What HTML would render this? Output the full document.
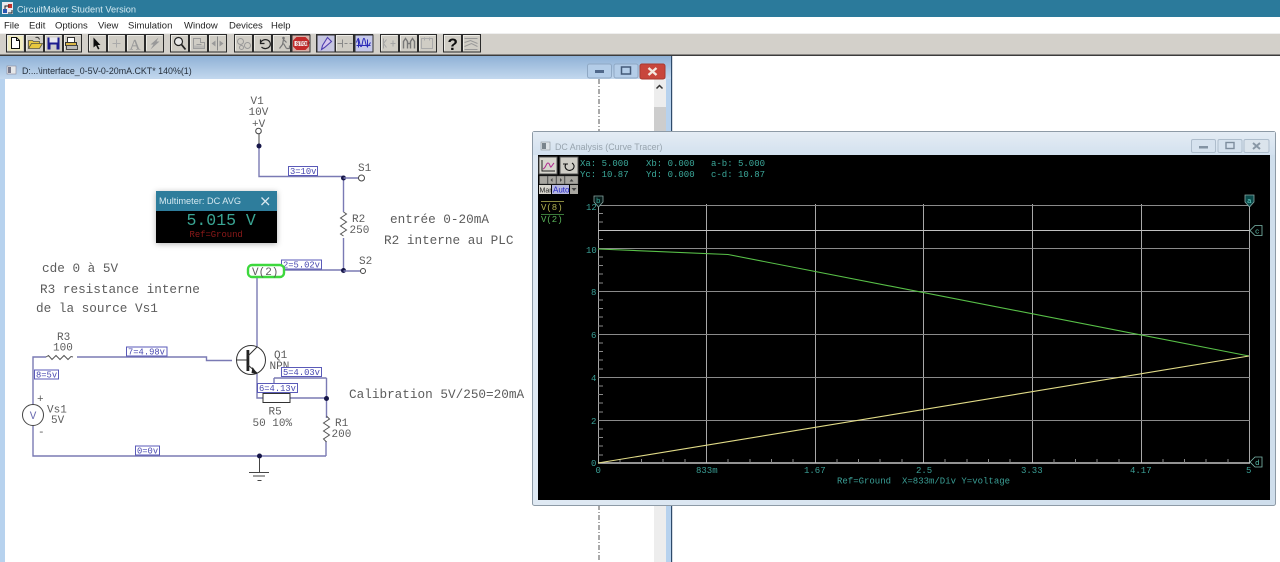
<!DOCTYPE html>
<html><head><meta charset="utf-8"><style>
html,body{margin:0;padding:0;background:#fff;width:1280px;height:562px;overflow:hidden}
svg{display:block}
.ui{font-family:"Liberation Sans",sans-serif}
.m{font-family:"Liberation Mono",monospace}
.sch{font-family:"Liberation Mono",monospace;font-size:12.7px;fill:#5c5c5c}
.lb{font-family:"Liberation Mono",monospace;font-size:11px;fill:#5c5c5c}
.nd{font-family:"Liberation Mono",monospace;font-size:8.8px;fill:#4848b0}
.cy{font-family:"Liberation Mono",monospace;font-size:9px;fill:#3ba89a}
.ax{font-family:"Liberation Mono",monospace;font-size:9px;fill:#3a9f96}
.w{stroke:#7a7ab4;stroke-width:1.4;fill:none}
.k{stroke:#444;stroke-width:1;fill:none}
.nb{fill:#fff;stroke:#5a5ab8;stroke-width:1}
.g{stroke:#a8a8a8;stroke-width:1;fill:none}
.t{stroke:#888;stroke-width:1}
</style></head><body>
<svg width="1280" height="562" viewBox="0 0 1280 562" xmlns="http://www.w3.org/2000/svg">
<defs>
<linearGradient id="cw" x1="0" y1="0" x2="0" y2="1"><stop offset="0" stop-color="#8fb1d6"/><stop offset="1" stop-color="#c3d8ee"/></linearGradient>
<linearGradient id="pw" x1="0" y1="0" x2="1" y2="0"><stop offset="0" stop-color="#dfe9f3"/><stop offset="1" stop-color="#cfdeec"/></linearGradient>
<linearGradient id="pt" x1="0" y1="0" x2="0" y2="1"><stop offset="0" stop-color="#e4ecf4"/><stop offset="1" stop-color="#d3e1ef"/></linearGradient>
<filter id="bl" x="-10%" y="-10%" width="120%" height="120%"><feGaussianBlur stdDeviation="0.35"/></filter>
<filter id="sh" x="-20%" y="-20%" width="140%" height="140%"><feDropShadow dx="0" dy="1" stdDeviation="3" flood-color="#000" flood-opacity=".3"/></filter>
<g id="btn"><rect x="0" y="0" width="18" height="17.5" fill="#d0cdc5" stroke="#2c2c2c" stroke-width="1"/><path d="M1 16V1H17" stroke="#ecebe6" fill="none"/></g>
</defs>

<!-- title bar -->
<rect x="0" y="0" width="1280" height="17" fill="#2b7a9b"/>
<rect x="2" y="2" width="11" height="12" fill="#e8e8ee"/>
<path d="M3 9h4v4H3z" fill="#2a55b0"/><path d="M8 4h4v4H8z" fill="#c0302a"/><path d="M5 9V6h4M8 13h4v-3" stroke="#222" fill="none"/>
<text x="17" y="12.5" class="ui" font-size="9.2" fill="#d4e9f1">CircuitMaker Student Version</text>

<!-- menu -->
<rect x="0" y="17" width="1280" height="16" fill="#fff"/>
<g class="ui" font-size="9.5" fill="#222">
<text x="4" y="28.7">File</text><text x="29" y="28.7">Edit</text><text x="55" y="28.7">Options</text><text x="98" y="28.7">View</text><text x="128" y="28.7">Simulation</text><text x="184" y="28.7">Window</text><text x="229" y="28.7">Devices</text><text x="271" y="28.7">Help</text>
</g>

<!-- toolbar -->
<rect x="0" y="33" width="1280" height="22" fill="#d3d0ca"/>
<rect x="0" y="33" width="1280" height="1" fill="#efefef"/>
<rect x="0" y="54.5" width="1280" height="1.5" fill="#3c3c3c"/>
<g transform="translate(6.5,34.5)" filter="url(#bl)">
<use href="#btn" x="0"/><use href="#btn" x="19"/><use href="#btn" x="38"/><use href="#btn" x="57"/>
<use href="#btn" x="82"/><use href="#btn" x="101"/><use href="#btn" x="120"/><use href="#btn" x="139"/>
<use href="#btn" x="164"/><use href="#btn" x="183"/><use href="#btn" x="202"/>
<use href="#btn" x="228"/><use href="#btn" x="247"/><use href="#btn" x="266"/><use href="#btn" x="285"/>
<use href="#btn" x="310"/><use href="#btn" x="329"/><use href="#btn" x="348"/>
<use href="#btn" x="374"/><use href="#btn" x="393"/><use href="#btn" x="412"/>
<use href="#btn" x="437"/><use href="#btn" x="456"/>
<!-- new -->
<rect x="1.5" y="1.5" width="15" height="14.5" fill="#f0ecc0"/><path d="M5 3h5l3 3v8H5z" fill="#fff" stroke="#111"/><path d="M10 3v3h3" stroke="#111" fill="none"/>
<!-- open -->
<path d="M22 14V6h4l1 1h6v2h-8l-3 5h11l3-5H25" fill="#e8c840" stroke="#554" stroke-width=".8"/><path d="M29 3q3-1 4 2" stroke="#333" fill="none"/>
<!-- save -->
<rect x="41" y="3" width="12" height="12" fill="#1a1a90"/><rect x="43" y="3" width="8" height="5" fill="#e8e8f0"/><rect x="44" y="10" width="6" height="5" fill="#ccc"/>
<!-- print -->
<rect x="61" y="3" width="7" height="5" fill="#fff" stroke="#333"/><path d="M59 8h11v3H59z" fill="#d9b64a" stroke="#333"/><rect x="60" y="11" width="11" height="4" fill="#bbb" stroke="#444"/>
<!-- arrow -->
<path d="M87 3v10l2.5-2 2 4 1.5-.8-2-3.700h3z" fill="#111"/>
<path d="M110 5v8M106 9h8" stroke="#aaa" stroke-width="1"/>
<text x="123" y="15" font-family="Liberation Serif,serif" font-size="15" fill="#999" stroke="#999" stroke-width=".2">A</text>
<path d="M152 3l-8 7 3 0-3 5 9-8-3 0z" fill="#999"/>
<!-- zoom -->
<circle cx="172" cy="7" r="4" fill="#e8e8e8" stroke="#222" stroke-width="1.200"/><path d="M175 10l4 5" stroke="#222" stroke-width="1.800"/>
<path d="M187 14V4h7v4h4v6z M190 10h5" fill="none" stroke="#999"/><rect x="187" y="11" width="11" height="3" fill="#aaa" opacity=".6"/>
<path d="M211 2v14" stroke="#888"/><path d="M209 6l-4 3 4 3zM213 6l4 3-4 3z" fill="#999"/>
<!-- sim -->
<circle cx="234" cy="7" r="3" fill="none" stroke="#999"/><circle cx="241" cy="11" r="3" fill="none" stroke="#999"/><circle cx="235" cy="13" r="2" fill="none" stroke="#999"/>
<path d="M254 8.500a5 4.500 0 1 1 1 4M254 5v4h4" fill="none" stroke="#222" stroke-width="1.200"/>
<path d="M273 14l3-4 1-5 3 3M277 9l3 5M280 14h3v-3" fill="none" stroke="#777" stroke-width="1.200"/><circle cx="277" cy="3.500" r="1.300" fill="#777"/>
<rect x="285.500" y=".5" width="18" height="17" fill="#d8b0a8" stroke="#333"/>
<path d="M290 2.500h9l3.500 3.500v6l-3.500 3.500h-9l-3.500-3.500v-6z" fill="#c22a2a"/><rect x="288" y="6.500" width="13" height="5" fill="#f6e6e6"/>
<text x="289.500" y="11" class="ui" font-size="5" font-weight="700" fill="#a02020">STOP</text>
<!-- probe -->
<rect x="310.500" y=".5" width="18" height="17" fill="#c7c7e2" stroke="#333"/>
<path d="M321 3l4 4-7 6-3 2 1-4z" fill="#d6c8ee" stroke="#5040b0" stroke-width="1.100"/>
<path d="M331 9h5M343 9h3" stroke="#888"/><path d="M336 5v8M338 9h3" stroke="#888"/>
<!-- analysis -->
<rect x="348.500" y=".5" width="18" height="17" fill="#c6c9ea" stroke="#333"/>
<path d="M350 8c2-6 2-5 3 0s2 6 3 0 2-5 3 0 2 5 5 0M350 11h14M352 5v8M361 5v8" stroke="#2a2ab8" fill="none" stroke-width="1"/>
<!-- more -->
<path d="M377 4v10M380 5l-3 4 3 4M384 9h5M386.500 6v6" stroke="#a5a5a5" fill="none"/>
<path d="M397 14V7l2-3 2 3v7M404 14V7l2-3 2 3v7M401 9h3" stroke="#777" fill="none" stroke-width="1.400"/>
<path d="M415 4h11v10h-11zM418 3v3M423 3v3" stroke="#aaa" fill="none"/>
<text x="441" y="15.500" class="ui" font-size="17" font-weight="700" fill="#111">?</text>
<path d="M458 4h13M458 8l6-2 7 3M458 12l7-3 6 3M458 15h13" stroke="#999" fill="none"/>
</g>

<!-- child window -->
<rect x="0" y="56" width="672" height="506" fill="#b7d2ee"/>
<rect x="0" y="56" width="672" height="23" fill="url(#cw)"/>
<rect x="671" y="56" width="1.200" height="506" fill="#2e4a6a"/>
<rect x="5" y="79" width="650" height="483" fill="#fff"/>
<rect x="654" y="79" width="12" height="483" fill="#ededed"/>
<rect x="654" y="107" width="12" height="100" fill="#cdcdcd"/>
<path d="M656.500 88.500l3-3 3 3" stroke="#333" stroke-width="1.500" fill="none"/>
<rect x="7" y="66" width="9" height="8" fill="#e6e8ea" stroke="#889" stroke-width=".6"/><rect x="8" y="67" width="3" height="6" fill="#778"/>
<text x="22" y="74" class="ui" font-size="8.900" fill="#26303c">D:...\interface_0-5V-0-20mA.CKT* 140%(1)</text>
<g>
<rect x="587.500" y="64" width="24" height="14" rx="2" fill="#b4cde8" stroke="#8fa8c4"/><rect x="595" y="70" width="9" height="3" fill="#50688a"/>
<rect x="614" y="64" width="24" height="14" rx="2" fill="#b4cde8" stroke="#8fa8c4"/><rect x="621.500" y="67" width="9" height="7" fill="none" stroke="#445a78" stroke-width="1.500"/>
<rect x="640" y="64" width="25" height="15" rx="2" fill="#c8463c" stroke="#a83a30"/><path d="M648.500 68l8 7M656.500 68l-8 7" stroke="#f4e8e0" stroke-width="2.400"/>
</g>

<!-- cursor dash line -->
<path d="M599 79V131M599 505V562" stroke="#555" stroke-width="1" stroke-dasharray="5 2 1 2"/>

<!-- schematic -->
<g filter="url(#bl)">
<text x="250.500" y="104" class="lb">V1</text><text x="248.500" y="115" class="lb">10V</text><text x="252" y="127" class="lb">+V</text>
<circle cx="258.500" cy="131" r="2.800" fill="#fff" stroke="#444"/>
<path d="M259 134V146" class="k"/>
<path d="M259 146V176.500H343.500M343.500 176.500V270M259 270H343.500" class="w" />
<circle cx="259" cy="146" r="2.500" fill="#151548"/><circle cx="343.500" cy="178" r="2.500" fill="#151548"/><circle cx="343.500" cy="270.500" r="2.500" fill="#151548"/>
<path d="M343.500 178H360M343.500 271H361" class="w"/>
<circle cx="361.500" cy="178" r="3" fill="#fff" stroke="#444"/><circle cx="363" cy="271" r="2.500" fill="#fff" stroke="#444"/>
<text x="358" y="171" class="lb">S1</text><text x="359" y="264" class="lb">S2</text>
<rect x="288.500" y="166.500" width="29" height="9" class="nb"/><text x="290" y="174" class="nd">3=10v</text>
<rect x="342" y="212" width="3" height="26" fill="#fff"/>
<path d="M343.500 212l3 2-6 4 6 4-6 4 6 4-6 4 3 2" fill="none" stroke="#555"/>
<text x="352" y="222" class="lb">R2</text><text x="349.500" y="233" class="lb">250</text>
<rect x="281.500" y="260" width="40" height="9" class="nb"/><text x="283" y="267.500" class="nd">2=5.02v</text>
<rect x="248" y="265" width="36" height="12" rx="4" fill="#fff" stroke="#3cd83c" stroke-width="2.400"/>
<text x="252" y="275" class="lb">V(2)</text>
<path d="M257 278V347" class="w"/>

<text x="42" y="272" class="sch">cde 0 à 5V</text>
<text x="40" y="293" class="sch">R3 resistance interne</text>
<text x="36" y="312" class="sch">de la source Vs1</text>
<text x="390" y="223" class="sch">entrée 0-20mA</text>
<text x="384" y="244" class="sch">R2 interne au PLC</text>
<text x="349" y="398" class="sch">Calibration 5V/250=20mA</text>

<!-- base circuit -->
<path d="M33 405V357H46M77 357H206.500V360.500H232" class="w"/>
<path d="M46 357l2.500-1.500 3.500 4 4-4 4 4 4-4 4 4 3-3 2 .5" fill="none" stroke="#555"/>
<text x="57" y="340" class="lb">R3</text><text x="53" y="350.500" class="lb">100</text>
<rect x="126.500" y="347" width="40.500" height="9" class="nb"/><text x="128" y="354.500" class="nd">7=4.98v</text>
<rect x="34.500" y="370" width="24" height="9" class="nb"/><text x="36" y="377.500" class="nd">8=5v</text>
<circle cx="33" cy="415" r="10.500" fill="#fff" stroke="#444"/>
<text x="29.700" y="419" class="lb" style="fill:#6a6ab0">V</text>
<text x="37" y="402" class="lb">+</text><text x="38" y="435" class="lb">-</text>
<text x="47" y="412.500" class="lb">Vs1</text><text x="51" y="423" class="lb">5V</text>
<path d="M33 426V456H326M326 441V456" class="w"/>
<rect x="135.500" y="446" width="24" height="9" class="nb"/><text x="137" y="453.500" class="nd">0=0v</text>
<circle cx="259.500" cy="456" r="2.500" fill="#151548"/>
<path d="M259.500 458V472M249 472.500H269M253 476H265M257.500 480.500H261.500" class="k"/>

<!-- transistor -->
<circle cx="251" cy="360" r="14.500" fill="#fff" stroke="#333"/>
<rect x="246.500" y="350" width="2.800" height="21" fill="#222"/>
<path d="M236 360H247M248 356L257 347M248 365L257 373" stroke="#333" fill="none"/>
<path d="M252.500 367l5 7-6 -1z" fill="#222"/>
<text x="274" y="358" class="lb">Q1</text><text x="269.500" y="369" class="lb">NPN</text>
<path d="M257 374V398H263M290 398H326.500M326.500 378V420M274 378H326.500M274 378V383" class="w"/>
<rect x="281.500" y="367.500" width="40" height="9" class="nb"/><text x="283" y="375" class="nd">5=4.03v</text>
<rect x="257.500" y="383.500" width="40" height="9" class="nb"/><text x="259" y="391" class="nd">6=4.13v</text>
<rect x="263" y="393.500" width="27" height="9" fill="#fff" stroke="#333"/>
<text x="268.500" y="414.500" class="lb">R5</text><text x="252.500" y="426" class="lb">50 10%</text>
<circle cx="326.500" cy="398.500" r="2.500" fill="#151548"/>
<rect x="325" y="418" width="3" height="22" fill="#fff"/>
<path d="M326.500 416l3 3-6 4 6 4-6 4 6 4-6 4 3 3" fill="none" stroke="#555"/>
<text x="335" y="426" class="lb">R1</text><text x="331.500" y="437" class="lb">200</text>
</g>

<!-- multimeter -->
<g filter="url(#sh)">
<rect x="156" y="191" width="121" height="52" fill="#000"/>
<rect x="156" y="191" width="121" height="20" fill="#2f7d9c"/>
</g>
<text x="159" y="204" class="ui" font-size="9.200" fill="#d4e8f0">Multimeter: DC AVG</text>
<path d="M261.500 197.500l7.500 7.500M269 197.500l-7.500 7.500" stroke="#d8e8f0" stroke-width="1.300"/>
<text x="186.500" y="225" class="m" font-size="16.500" fill="#3aa594">5.015 V</text>
<text x="189.500" y="237" class="m" font-size="8.900" fill="#8e1a1a">Ref=Ground</text>

<!-- plot window -->
<rect x="532.500" y="131.500" width="743" height="374" rx="2" fill="url(#pw)" stroke="#8d9aa6"/>
<rect x="533" y="132" width="742" height="23" fill="url(#pt)"/>
<rect x="538" y="155" width="732" height="345" fill="#000"/>
<rect x="541" y="142" width="9" height="8" fill="#dfe4e8" stroke="#8a949c" stroke-width=".6"/><rect x="542" y="143" width="4" height="6" fill="#7a848c"/>
<text x="555" y="150" class="ui" font-size="8.900" fill="#98a4ae">DC Analysis (Curve Tracer)</text>
<rect x="1191.500" y="139.500" width="24" height="13" rx="1.500" fill="#d6e2ee" stroke="#aebdcc"/><rect x="1199" y="146" width="9" height="2.500" fill="#8393a3"/>
<rect x="1218" y="139.500" width="24" height="13" rx="1.500" fill="#d6e2ee" stroke="#aebdcc"/><rect x="1226" y="142.500" width="8" height="6" fill="none" stroke="#7d8d9d" stroke-width="1.400"/>
<rect x="1244" y="139.500" width="25" height="13" rx="1.500" fill="#dbe4ec" stroke="#aebdcc"/><path d="M1253 143l7 6M1260 143l-7 6" stroke="#8a98a6" stroke-width="2"/>

<!-- plot buttons -->
<rect x="539" y="157" width="18" height="17" fill="#d8d6ce" stroke="#555"/><path d="M542 160v11h13" stroke="#222" fill="none"/><path d="M543 169c3-1 3-6 5-6s2 5 3 4 2-3 3-4" stroke="#b02890" fill="none"/>
<rect x="560" y="157" width="18" height="17" fill="#cfcdc6" stroke="#555"/><path d="M572 163a4.500 4 0 1 1-6 1M563 164h5" stroke="#111" fill="none" stroke-width="1.100"/>
<g fill="#a8a6a0" stroke="#555" stroke-width=".5"><rect x="539.500" y="176" width="8" height="8"/><rect x="548" y="176" width="8" height="8"/><rect x="556.500" y="176" width="8" height="8"/><rect x="565" y="176" width="13" height="8"/></g>
<path d="M552.500 178l-2 2 2 2zM560 178l2 2-2 2zM569.500 181.500l2-2.500 2 2.500z" fill="#444"/>
<rect x="539" y="185" width="12" height="9" fill="#d8d6ce"/><text x="539.500" y="192.500" class="ui" font-size="7" fill="#222">Man</text>
<rect x="552" y="185" width="17" height="9" fill="#b6b8e0"/><text x="553" y="192.500" class="ui" font-size="8" fill="#2222c0">Auto</text>
<rect x="570" y="185" width="8" height="9" fill="#a8a6a0"/><path d="M571.500 188h5l-2.500 3z" fill="#444"/>

<!-- readouts -->
<g filter="url(#bl)">
<text x="580" y="166" class="cy">Xa: 5.000</text><text x="646" y="166" class="cy">Xb: 0.000</text><text x="711" y="166" class="cy">a-b: 5.000</text>
<text x="580" y="177" class="cy">Yc: 10.87</text><text x="646" y="177" class="cy">Yd: 0.000</text><text x="711" y="177" class="cy">c-d: 10.87</text>
<path d="M541 201.500H564" stroke="#8a8a40"/><text x="541" y="210" class="cy" style="fill:#b0b050">V(8)</text>
<path d="M541 214.500H564" stroke="#3a7a3a"/><text x="541" y="222" class="cy" style="fill:#58b058">V(2)</text>
<text x="586" y="210" class="ax">12</text><text x="586" y="253" class="ax">10</text><text x="591" y="295" class="ax">8</text><text x="591" y="338" class="ax">6</text><text x="591" y="381" class="ax">4</text><text x="591" y="424" class="ax">2</text><text x="591" y="466" class="ax">0</text>
<text x="595.500" y="473" class="ax">0</text><text x="696" y="473" class="ax">833m</text><text x="804" y="473" class="ax">1.67</text><text x="916" y="473" class="ax">2.5</text><text x="1021" y="473" class="ax">3.33</text><text x="1130" y="473" class="ax">4.17</text><text x="1246" y="473" class="ax">5</text>
<text x="837" y="483.500" class="ax">Ref=Ground</text><text x="902" y="483.500" class="ax">X=833m/Div Y=voltage</text>
</g>

<!-- grid -->
<g class="g" filter="url(#bl)">
<path d="M598.500 204V463M706.500 204V463M815.500 204V463M923.500 204V463M1032.500 204V463M1141.500 204V463M1249.500 204V463"/>
<path d="M598 205.500H1250M598 248.500H1250M598 291.500H1250M598 334.500H1250M598 377.500H1250M598 420.500H1250" stroke="#8a8a8a"/>
<path d="M598 230.500H1250" stroke="#c0c0c0"/>
<path d="M598 463H1250" stroke="#c4c4c4" stroke-width="1.600"/>
</g>
<g class="t">
<path d="M598 213.500h5M598 222h5M598 239.500h5M598 257h5M598 265.500h5M598 274h5M598 283h5M598 300h5M598 308.500h5M598 317h5M598 326h5M598 343h5M598 351.500h5M598 360h5M598 369h5M598 386h5M598 394.500h5M598 403h5M598 412h5M598 429h5M598 437.500h5M598 446h5M598 455h5"/>
<path d="M620 459v4M641.500 459v4M663 459v4M685 459v4M728 459v4M750 459v4M771.500 459v4M793 459v4M837 459v4M858.500 459v4M880 459v4M902 459v4M945 459v4M967 459v4M988.500 459v4M1010 459v4M1054 459v4M1075.500 459v4M1097 459v4M1119 459v4M1163 459v4M1184.500 459v4M1206 459v4M1228 459v4"/>
</g>
<path d="M598 249L728 254.500L1249 356" stroke="#58c048" stroke-width="1.100" fill="none"/>
<path d="M598 463L1249 356" stroke="#e2dc88" stroke-width="1.100" fill="none"/>

<!-- cursors -->
<path d="M594 196h9v6l-4.500 5-4.500-5z" fill="#061a18" stroke="#8aa8a4" stroke-width=".8"/><text x="596" y="203" class="m" font-size="7.500" fill="#3ba89a">b</text>
<path d="M1245 195h9v7l-4.500 5-4.500-5z" fill="#0b4a4a" stroke="#8aa8a4" stroke-width=".8"/><text x="1247" y="203" class="m" font-size="7.500" fill="#62d0c4">a</text>
<path d="M1250 230.500l5-5h7v10h-7z" fill="#000" stroke="#7fbcb0" stroke-width=".8"/><text x="1255" y="233.500" class="m" font-size="7.500" fill="#5ac0ac">c</text>
<path d="M1250 462l5-5h7v10h-7z" fill="#000" stroke="#7fbcb0" stroke-width=".8"/><text x="1255" y="465" class="m" font-size="7.500" fill="#5ac0ac">d</text>
</svg>
</body></html>
